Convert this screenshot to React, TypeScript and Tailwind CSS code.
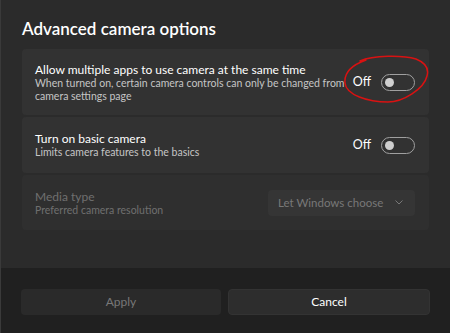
const font = { fontFamily: 'Lato, "Noto Sans", sans-serif' };

const Toggle = () => (
  <div className="flex items-center gap-[10px] shrink-0">
    <span className="text-[12.5px] text-white">Off</span>
    <div className="w-[34px] h-[17px] rounded-full border border-[#a0a0a0] flex items-center px-[3px]">
      <div className="w-[9px] h-[9px] rounded-full bg-[#cfcfcf]" />
    </div>
  </div>
);

export default function App() {
  return (
    <div
      className="w-[450px] h-[333px] flex flex-col bg-[#2b2b2b] border-l border-[#3a3a3a] overflow-hidden whitespace-nowrap"
      style={font}
    >
      <div className="flex-1 px-[21px]">
        <h1 className="pt-[17px] text-[17px] font-semibold text-white leading-[24px]">
          Advanced camera options
        </h1>

        <div className="mt-[8px] flex flex-col gap-[2px]">
          {/* Card 1 */}
          <div className="relative h-[66px] rounded-[4px] bg-[#323232] pl-[13px] pr-[14px] flex items-center justify-between">
            <div className="flex flex-col flex-1 min-w-0">
              <span className="text-[12px] leading-[15px] text-white">
                Allow multiple apps to use camera at the same time
              </span>
              <span className="text-[10.5px] leading-[13px] text-[#c5c5c5]">
                When turned on, certain camera controls can only be changed from
                <br />
                camera settings page
              </span>
            </div>
            <Toggle />
            <svg
              className="absolute left-[316px] top-[6px]"
              width="92"
              height="50"
              viewBox="0 0 92 50"
              fill="none"
            >
              <path
                d="M22 6 C35 0 65 0 78 4 C88 8 91 14 89 21 C86 34 65 47 50 47 C30 47 8 40 7 28 C6 18 14 10 28 5"
                stroke="#d81212"
                strokeWidth="1.5"
                strokeLinecap="round"
              />
            </svg>
          </div>

          {/* Card 2 */}
          <div className="h-[56px] rounded-[4px] bg-[#323232] pl-[13px] pr-[14px] flex items-center justify-between">
            <div className="flex flex-col flex-1 min-w-0">
              <span className="text-[12px] leading-[15px] text-white">Turn on basic camera</span>
              <span className="text-[10.5px] leading-[13px] text-[#c5c5c5]">
                Limits camera features to the basics
              </span>
            </div>
            <Toggle />
          </div>

          {/* Card 3 */}
          <div className="h-[55px] rounded-[4px] bg-[#2f2f2f] pl-[13px] pr-[14px] flex items-center justify-between">
            <div className="flex flex-col flex-1 min-w-0">
              <span className="text-[12px] leading-[15px] text-[#6f6f6f]">Media type</span>
              <span className="text-[10.5px] leading-[13px] text-[#6f6f6f]">
                Preferred camera resolution
              </span>
            </div>
            <div className="w-[147px] h-[26px] shrink-0 rounded-[4px] bg-[#353535] flex items-center justify-between pl-[10px] pr-[12px]">
              <span className="text-[11.5px] text-[#787878]">Let Windows choose</span>
              <svg width="8" height="5" viewBox="0 0 8 5" fill="none">
                <path d="M0.5 0.5 L4 4 L7.5 0.5" stroke="#787878" strokeWidth="1" />
              </svg>
            </div>
          </div>
        </div>
      </div>

      <div className="h-[65px] bg-[#202020] px-[20px] pt-[21px] flex gap-[7px]">
        <button className="flex-1 h-[26px] rounded-[4px] bg-[#2a2a2a] text-[12px] text-[#787878]">
          Apply
        </button>
        <button className="flex-1 h-[26px] rounded-[4px] bg-[#2d2d2d] border border-[#333333] text-[12px] text-white">
          Cancel
        </button>
      </div>
    </div>
  );
}
